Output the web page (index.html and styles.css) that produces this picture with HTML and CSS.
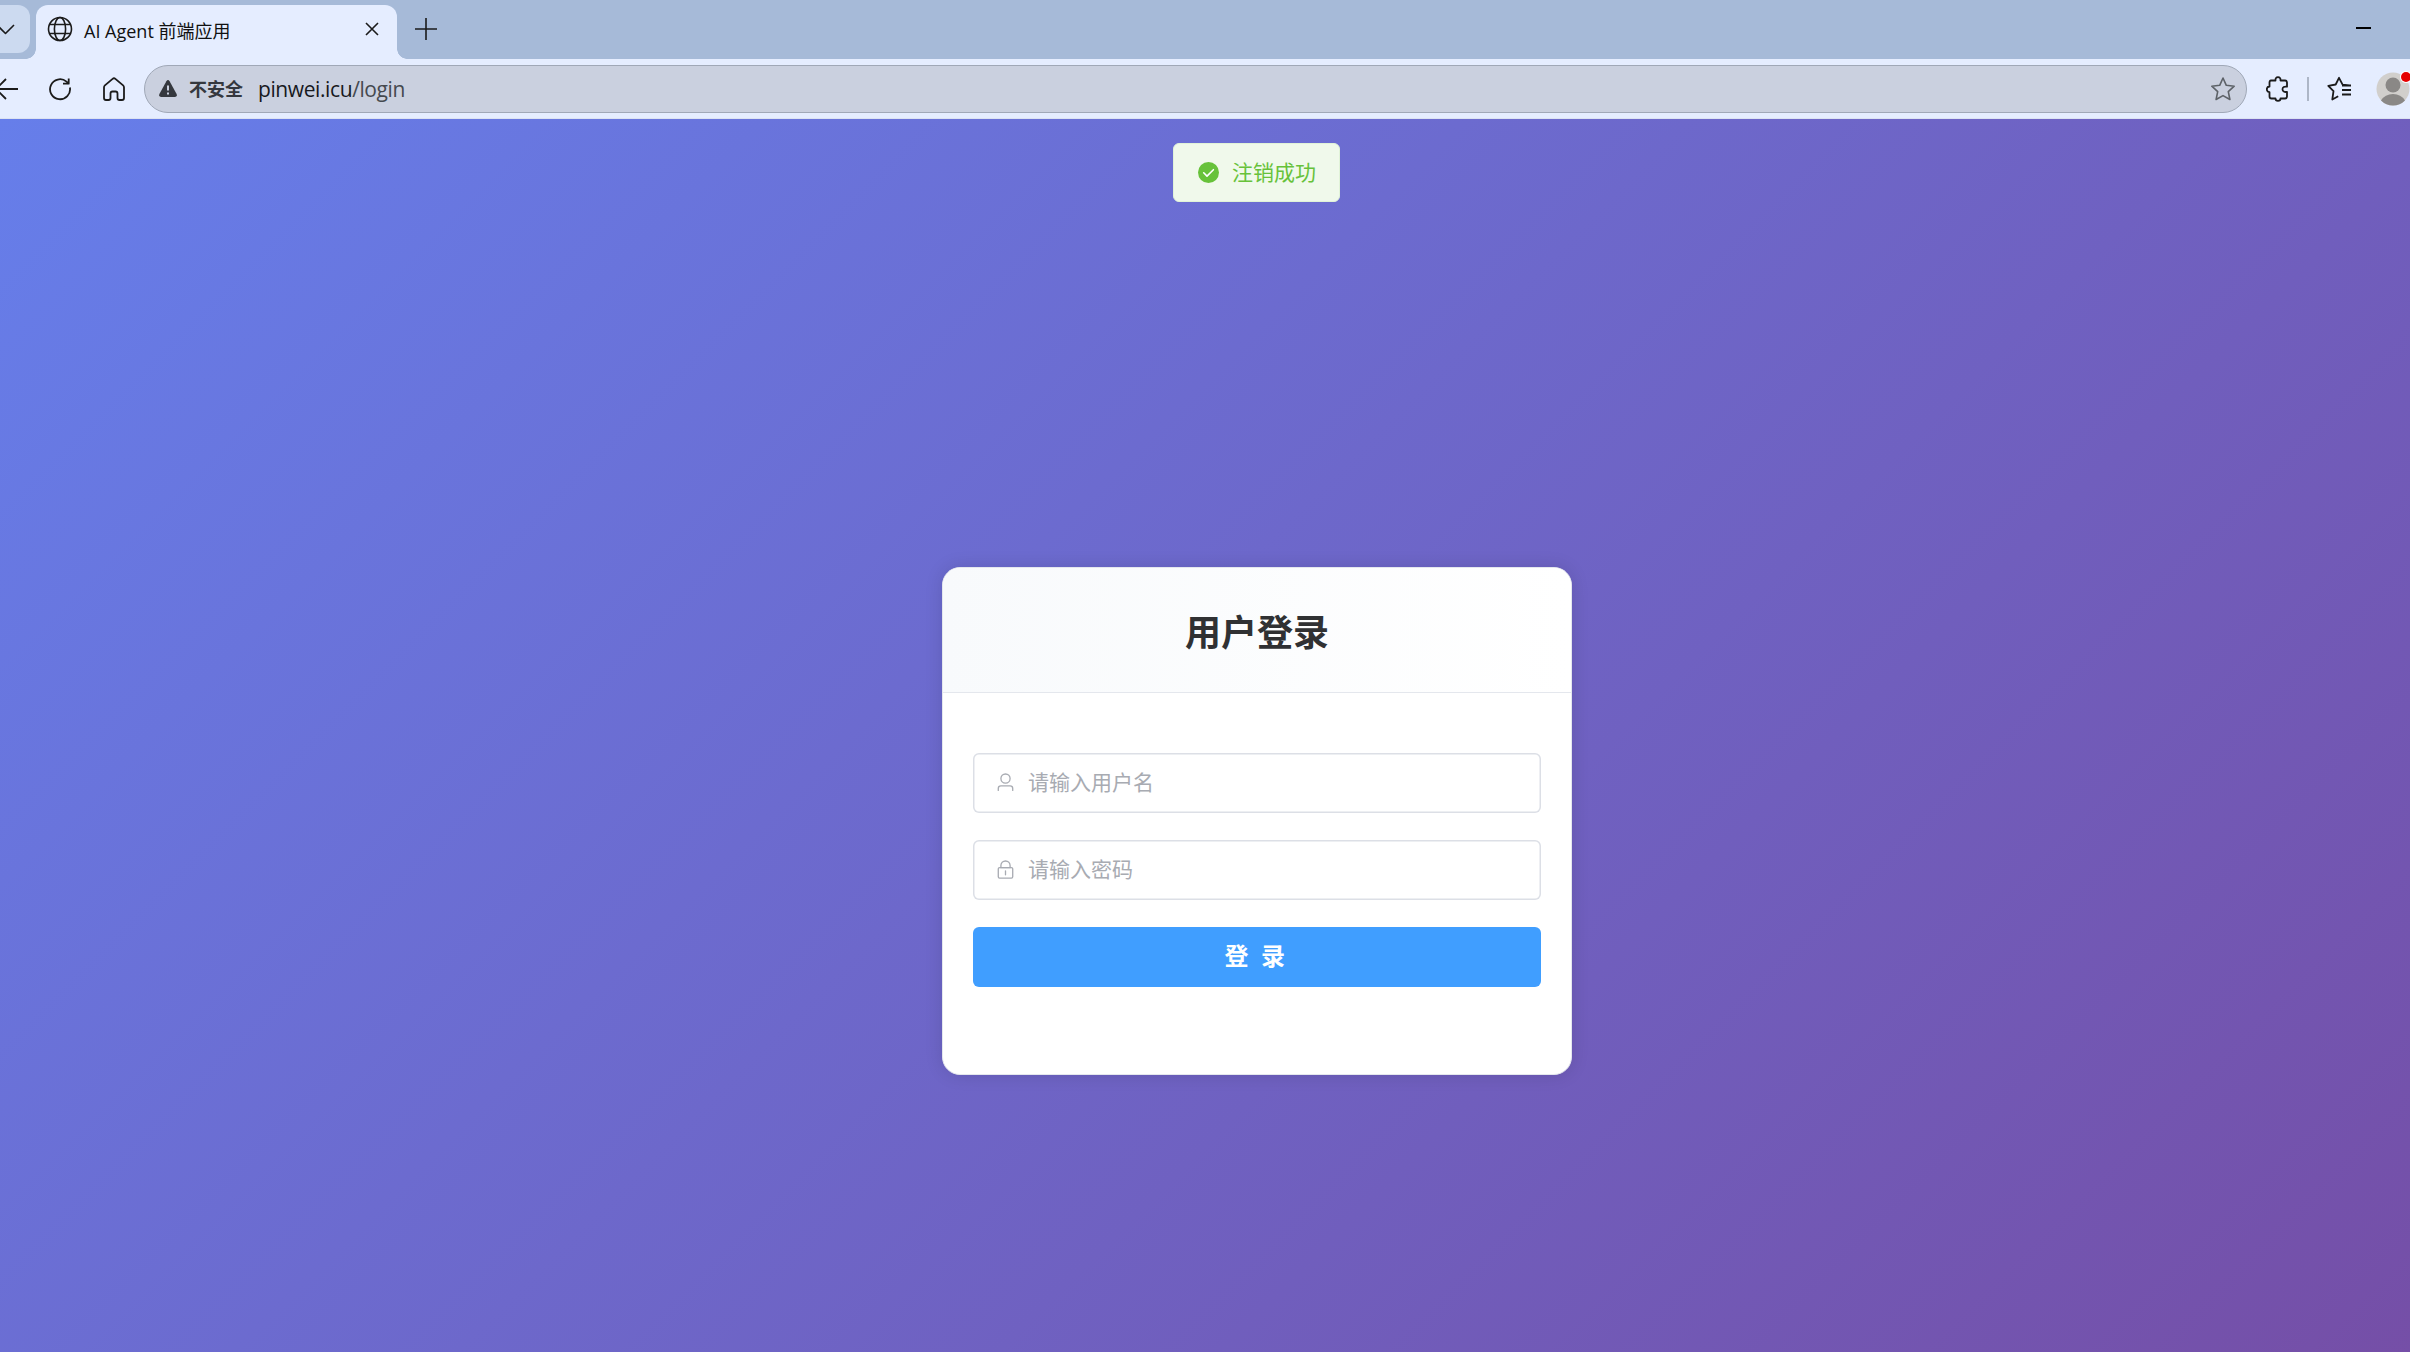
FILE: index.html
```html
<!DOCTYPE html>
<html lang="zh-CN">
<head>
    <meta charset="UTF-8">
    <meta name="viewport" content="width=device-width, initial-scale=1.0">
    <title>AI Agent 前端应用</title>
    <link rel="stylesheet" href="styles.css">
</head>
<body>
    <div class="tab-strip">
        <div class="tab-search">
            <svg width="20" height="14" viewBox="0 0 20 14"><path d="M1 2l8.500 8.500L18 2"/></svg>
        </div>
        <div class="tab">
            <svg class="globe" width="26" height="26" viewBox="0 0 26 26">
                <circle cx="13" cy="13" r="11.500"/>
                <ellipse cx="13" cy="13" rx="5.600" ry="11.500"/>
                <path d="M2.500 8.500h21M2.500 17.500h21"/>
            </svg>
            <span class="tab-title">AI Agent <span class="tab-title-cn">前端应用</span></span>
            <svg class="tab-close" width="14" height="14" viewBox="0 0 14 14"><path d="M1 1l12 12M13 1L1 13"/></svg>
        </div>
        <svg class="new-tab" width="22" height="22" viewBox="0 0 22 22"><path d="M11 0v22M0 11h22"/></svg>
        <span class="minimize"></span>
    </div>

    <div class="toolbar">
        <svg class="back" width="18" height="24" viewBox="0 0 18 24"><path d="M18 12H-4M6 2L-4 12L6 22"/></svg>
        <svg class="reload" width="24" height="24" viewBox="0 0 24 24">
            <path d="M21.900 10.500A10 10 0 1 1 18.500 4.600L20.500 6.500"/>
            <path d="M20.700 1.500V6.700H15"/>
        </svg>
        <svg class="home" width="24" height="24" viewBox="0 0 24 24">
            <path d="M2 10.400q0-1.200.9-2L10.600 1.900q1.400-1.200 2.800 0L21.100 8.400q.9.800.9 2V21q0 2-2 2h-2.500q-2 0-2-2v-4.500q0-2-2-2h-3q-2 0-2 2V21q0 2-2 2H4q-2 0-2-2z"/>
        </svg>
        <div class="address">
            <svg class="warning" width="18" height="17" viewBox="0 0 18 17">
                <path class="warning-shape" d="M7.400 1.200q1.600-2.200 3.200 0L17.600 14q.9 2.600-1.800 3H2.200Q-.5 16.600.4 14z"/>
                <path class="warning-mark" d="M9 5.500v5M9 12.500v2"/>
            </svg>
            <span class="unsafe">不安全</span>
            <span class="url">pinwei.icu<span class="url-path">/login</span></span>
            <svg class="star" width="26" height="26" viewBox="0 0 26 26">
                <path d="M13 2l3.300 7.300 7.900.9-5.900 5.400 1.600 7.900L13 19.600l-6.900 3.900 1.600-7.900L1.800 10.200l7.900-.9z"/>
            </svg>
        </div>
        <svg class="extension" width="24" height="26" viewBox="0 0 24 26">
            <path d="M5 4.500h4.500C9.300 2.300 10.300 1.200 12 1.200s2.700 1.100 2.500 3.300H19q2 0 2 2v4.200c-2.700-.4-4.500.5-4.500 2.600s1.800 3 4.500 2.600V20.500q0 2-2 2h-4.500c0 1.500-.9 2.300-2.500 2.300s-2.500-.8-2.500-2.300H5.500q-2 0-2-2v-4.300C1.700 16 .8 15 .8 13.300s.9-2.600 2.700-2.800V6.500q0-2 1.500-2z"/>
        </svg>
        <span class="divider"></span>
        <svg class="favorites" width="26" height="26" viewBox="0 0 26 26">
            <path d="M23.500 9.300l-6.900-.7L13 1.800 9.700 8.500l-7.400 1.300 5.200 5.300L6.300 23.500l5.900-3.300M16 9.500h9M16 14h9M16 18.500h9"/>
        </svg>
        <div class="profile">
            <svg width="34" height="34" viewBox="0 0 34 34">
                <circle class="avatar-bg" cx="17" cy="17" r="16.500"/>
                <circle class="avatar-body" cx="17" cy="13" r="7.500"/>
                <path class="avatar-body" d="M5 28.500Q9 22 17 22t12 6.500Q24 33.500 17 33.500T5 28.500z"/>
            </svg>
            <span class="badge"></span>
        </div>
    </div>

    <div class="login-page">
        <div class="message">
            <svg width="21" height="21" viewBox="0 0 21 21">
                <circle cx="10.500" cy="10.500" r="10.500"/>
                <path d="M5.700 10.800l3.300 3.300 6.400-6.400"/>
            </svg>
            <span class="message-text">注销成功</span>
        </div>

        <div class="login-card">
            <div class="card-header">
                <h2>用户登录</h2>
            </div>
            <form class="login-form">
                <div class="input-box">
                    <svg width="21" height="21" viewBox="0 0 1024 1024"><path d="M512 512a192 192 0 1 0 0-384 192 192 0 0 0 0 384m0 64a256 256 0 1 1 0-512 256 256 0 0 1 0 512m320 320v-96a96 96 0 0 0-96-96H288a96 96 0 0 0-96 96v96a32 32 0 1 1-64 0v-96a160 160 0 0 1 160-160h448a160 160 0 0 1 160 160v96a32 32 0 1 1-64 0"/></svg>
                    <input type="text" placeholder="请输入用户名">
                </div>
                <div class="input-box">
                    <svg width="21" height="21" viewBox="0 0 1024 1024"><path d="M224 448a32 32 0 0 0-32 32v384a32 32 0 0 0 32 32h576a32 32 0 0 0 32-32V480a32 32 0 0 0-32-32zm0-64h576a96 96 0 0 1 96 96v384a96 96 0 0 1-96 96H224a96 96 0 0 1-96-96V480a96 96 0 0 1 96-96"/><path d="M512 544a32 32 0 0 1 32 32v192a32 32 0 1 1-64 0V576a32 32 0 0 1 32-32m192-160v-64a192 192 0 1 0-384 0v64zM512 64a256 256 0 0 1 256 256v128H256V320A256 256 0 0 1 512 64"/></svg>
                    <input type="password" placeholder="请输入密码">
                </div>
                <button type="button" class="login-btn">登 录</button>
            </form>
        </div>
    </div>
</body>
</html>
```

FILE: styles.css
```css
* {
    box-sizing: border-box;
}

html {
    height: 100%;
    overflow: hidden;
}

body {
    display: flex;
    flex-direction: column;
    margin: 0;
    height: 100%;
    overflow: hidden;
    font-family: "Noto Sans", "Noto Sans CJK SC", sans-serif;
}

svg {
    display: block;
    flex: none;
    fill: none;
    stroke: #1b1b1b;
    stroke-width: 1.6;
    stroke-linejoin: round;
}

/* tabs */
.tab-strip {
    display: flex;
    flex: none;
    height: 59px;
    padding-top: 5px;
    background-color: #a6bad8;
}

.tab-search {
    width: 30px;
    height: 48px;
    padding: 18px 0 0 0;
    border-radius: 0 12px 12px 0;
    background-color: #ccdaf0;
}

.tab-search svg {
    margin-left: -4px;
}

.tab {
    position: relative;
    display: flex;
    width: 361px;
    height: 54px;
    margin-left: 6px;
    padding-left: 11px;
    border-radius: 12px 12px 0 0;
    background-color: #e5edff;
}

.tab::before,
.tab::after {
    content: "";
    position: absolute;
    bottom: 0;
    width: 10px;
    height: 10px;
}

.tab::before {
    left: -10px;
    background: radial-gradient(circle at 0 0, transparent 9.5px, #e5edff 10px);
}

.tab::after {
    right: -10px;
    background: radial-gradient(circle at 100% 0, transparent 9.5px, #e5edff 10px);
}

.globe {
    margin-top: 11px;
}

.tab-title {
    width: 281px;
    margin-left: 11px;
    font-family: "Open Sans", "Noto Sans CJK SC", sans-serif;
    font-size: 18px;
    line-height: 50px;
    letter-spacing: 0;
    color: #111;
    white-space: nowrap;
}

.tab-title-cn {
    font-family: "Noto Sans CJK SC", sans-serif;
}

.tab-close {
    margin-top: 17px;
}

.new-tab {
    margin: 13px 0 0 18px;
}

.minimize {
    width: 15px;
    height: 2px;
    margin: 22px 39px 0 auto;
    background-color: #000;
}

/* toolbar */
.toolbar {
    display: flex;
    flex: none;
    align-items: center;
    height: 60px;
    background-color: #e5edff;
    border-bottom: 1px solid #dbe2f2;
}

.reload {
    margin-left: 30px;
}

.home {
    margin-left: 30px;
}

.back,
.reload,
.home,
.extension,
.favorites {
    stroke-width: 1.8;
}

.address {
    display: flex;
    align-items: center;
    width: 2103px;
    height: 48px;
    margin-left: 18px;
    padding: 0 10px 0 14px;
    border: 1px solid #a0a8b7;
    border-radius: 24px;
    background-color: #cad0df;
}

.warning-shape {
    fill: #35383e;
    stroke: none;
}

.warning-mark {
    stroke: #cad0df;
    stroke-width: 2;
}

.unsafe {
    width: 69px;
    margin-left: 12px;
    padding-bottom: 1px;
    font-family: "Noto Sans CJK SC", sans-serif;
    font-size: 18px;
    font-weight: bold;
    color: #35383e;
}

.url {
    flex: 1;
    padding-top: 1px;
    font-family: "Open Sans", sans-serif;
    font-size: 21px;
    letter-spacing: -0.4px;
    color: #17191d;
}

.url-path {
    color: #45494f;
}

.star {
    stroke: #5d6268;
}

.extension {
    margin-left: 19px;
}

.divider {
    width: 2px;
    height: 24px;
    margin-left: 17px;
    background-color: #adb6c7;
}

.favorites {
    margin-left: 17px;
}

.profile {
    position: relative;
    margin-left: 24px;
}

.profile svg {
    stroke: none;
}

.avatar-bg {
    fill: #d1cfcc;
}

.avatar-body {
    fill: #8a8886;
}

.badge {
    position: absolute;
    top: 0;
    left: 25px;
    width: 10px;
    height: 10px;
    border-radius: 50%;
    background-color: #e50000;
    box-shadow: 0 0 0 1px #fff;
}

/* login page */
.login-page {
    position: relative;
    display: flex;
    flex: 1;
    align-items: flex-start;
    justify-content: center;
    padding: 448px 0 0 104px;
    background: linear-gradient(135deg, #667eea 0%, #764ba2 100%) 0 0 / 2514px 1404px no-repeat;
}

.message {
    position: absolute;
    top: 24px;
    left: 1173px;
    display: flex;
    align-items: center;
    width: 167px;
    height: 59px;
    padding-left: 24px;
    border: 1px solid #e1f3d8;
    border-radius: 6px;
    background-color: #f0f9eb;
    color: #67c23a;
    font-family: "Noto Sans CJK SC", sans-serif;
    font-size: 21px;
    line-height: 21px;
}

.message svg {
    margin-right: 13px;
}

.message-text {
    padding-bottom: 2px;
}

.message circle {
    fill: #67c23a;
    stroke: none;
}

.message path {
    stroke: #fff;
    stroke-linecap: round;
}

.login-card {
    width: 630px;
    height: 508px;
    border: 1px solid #e4e7ed;
    border-radius: 18px;
    background-color: #fff;
    box-shadow: 0 0 18px rgba(0, 0, 0, 0.12);
    overflow: hidden;
}

.card-header {
    display: flex;
    align-items: center;
    justify-content: center;
    height: 125px;
    border-bottom: 1px solid #e4e7ed;
    background: linear-gradient(90deg, #f8fafc, #fff);
}

.card-header h2 {
    margin: 0;
    font-family: "Noto Sans CJK SC", sans-serif;
    font-size: 36px;
    font-weight: bold;
    line-height: 54px;
    color: #303133;
}

.login-form {
    display: flex;
    flex-direction: column;
    gap: 27px;
    padding: 60px 30px;
}

.input-box {
    display: flex;
    align-items: center;
    height: 60px;
    padding: 0 22px;
    border-radius: 6px;
    box-shadow: inset 0 0 0 1.5px #dcdfe6;
}

.input-box svg {
    margin-bottom: 1px;
    fill: #a8abb2;
    stroke: none;
}

.input-box input {
    flex: 1;
    margin-left: 12px;
    padding: 0 0 5px;
    border: none;
    outline: none;
    background: none;
    font-family: "Noto Sans CJK SC", sans-serif;
    font-size: 21px;
}

.input-box input::placeholder {
    color: #a8abb2;
}

.login-btn {
    height: 60px;
    padding: 0 1px 5px 0;
    border: none;
    border-radius: 6px;
    background-color: #409eff;
    color: #fff;
    font-family: "Noto Sans CJK SC", sans-serif;
    font-size: 24px;
    font-weight: bold;
    letter-spacing: 3.5px;
    cursor: pointer;
}
```
